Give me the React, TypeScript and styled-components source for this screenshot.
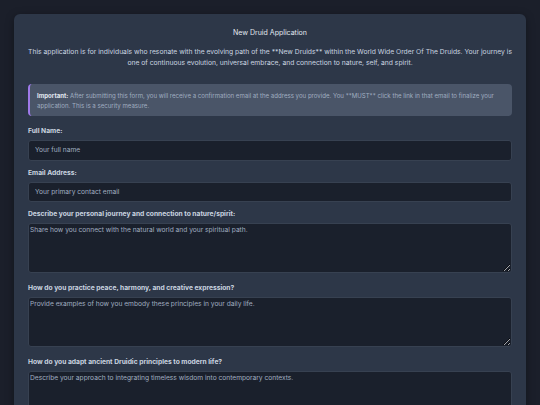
import styled, { createGlobalStyle } from "styled-components";

const GlobalStyle = createGlobalStyle`
  html, body {
    margin: 0;
    padding: 0;
    background-color: #1b1f2a;
    font-family: Inter, "Noto Sans", "Liberation Sans", sans-serif;
  }
  * {
    box-sizing: border-box;
  }
`;

type FieldInfo = {
  id: string;
  label: string;
  placeholder: string;
  multiline?: boolean;
};

const fields: FieldInfo[] = [
  { id: "name", label: "Full Name:", placeholder: "Your full name" },
  {
    id: "email",
    label: "Email Address:",
    placeholder: "Your primary contact email",
  },
  {
    id: "journey",
    label: "Describe your personal journey and connection to nature/spirit:",
    placeholder:
      "Share how you connect with the natural world and your spiritual path.",
    multiline: true,
  },
  {
    id: "peace",
    label: "How do you practice peace, harmony, and creative expression?",
    placeholder:
      "Provide examples of how you embody these principles in your daily life.",
    multiline: true,
  },
  {
    id: "adapt",
    label: "How do you adapt ancient Druidic principles to modern life?",
    placeholder:
      "Describe your approach to integrating timeless wisdom into contemporary contexts.",
    multiline: true,
  },
];

function App() {
  return (
    <Page>
      <GlobalStyle />
      <Card>
        <Title>New Druid Application</Title>
        <Intro>
          This application is for individuals who resonate with the evolving
          path of the **New Druids** within the World Wide Order Of The Druids.
          Your journey is one of continuous evolution, universal embrace, and
          connection to nature, self, and spirit.
        </Intro>
        <Notice>
          <strong>Important:</strong> After submitting this form, you will
          receive a confirmation email at the address you provide. You **MUST**
          click the link in that email to finalize your application. This is a
          security measure.
        </Notice>
        <form onSubmit={(e) => e.preventDefault()}>
          {fields.map((f) => (
            <Field key={f.id} $tall={!!f.multiline}>
              <Label htmlFor={f.id}>{f.label}</Label>
              {f.multiline ? (
                <TextArea id={f.id} placeholder={f.placeholder} rows={4} />
              ) : (
                <Input id={f.id} placeholder={f.placeholder} />
              )}
            </Field>
          ))}
        </form>
      </Card>
    </Page>
  );
}

const Page = styled.div`
  padding: 14px 14px 0;
`;

const Card = styled.div`
  background-color: #2d3748;
  border-radius: 6px;
  padding: 14px 14px 20px;
  box-shadow: 0 2px 8px rgba(0, 0, 0, 0.35);
`;

const Title = styled.h1`
  margin: 0;
  font-size: 7px;
  line-height: 10px;
  font-weight: 400;
  color: #e2e8f0;
  text-align: center;
`;

const Intro = styled.p`
  margin: 9px -1px 16px;
  font-size: 6.75px;
  line-height: 10.5px;
  color: #cbd5e0;
  text-align: center;
`;

const Notice = styled.div`
  background-color: #4a5568;
  border-left: 2px solid #9f7aea;
  border-radius: 4px;
  padding: 7px 8px 6px 7px;
  font-size: 6.1px;
  line-height: 9.5px;
  color: #a0aec0;
  margin-bottom: 10px;

  strong {
    color: #e2e8f0;
    font-weight: 700;
  }
`;

const Field = styled.div<{ $tall?: boolean }>`
  margin-bottom: ${(props) => (props.$tall ? 10 : 7)}px;
`;

const Label = styled.label`
  display: block;
  font-size: 6.7px;
  line-height: 10px;
  font-weight: 700;
  color: #cbd5e0;
  margin-bottom: 4px;
`;

const Input = styled.input`
  display: block;
  width: 100%;
  height: 20.5px;
  padding: 0 6px;
  background-color: #1a202c;
  border: 1px solid #374151;
  border-radius: 3px;
  color: #e2e8f0;
  font-family: inherit;
  font-size: 6.65px;
  outline: none;

  &::placeholder {
    color: #a0aec0;
  }
`;

const TextArea = styled.textarea`
  display: block;
  width: 100%;
  height: 50px;
  padding: 2px 1px;
  background-color: #1a202c;
  border: 1px solid #374151;
  border-radius: 3px;
  color: #e2e8f0;
  font-family: inherit;
  font-size: 6.65px;
  line-height: 8px;
  resize: vertical;
  outline: none;
  color-scheme: dark;

  &::placeholder {
    color: #a0aec0;
  }
`;

export default App;
